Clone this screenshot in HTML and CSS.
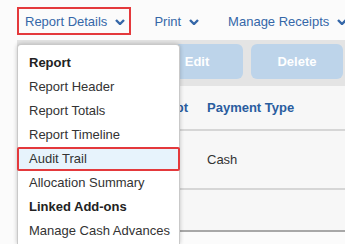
FILE: index.html
```html
<!DOCTYPE html>
<html lang="en">
<head>
    <meta charset="UTF-8">
    <meta name="viewport" content="width=device-width, initial-scale=1.0">
    <title>Report Details</title>
    <link rel="stylesheet" href="styles.css">
</head>
<body>
    <div class="nav">
        <div class="nav-item active">Report Details
            <svg class="chev" viewBox="0 0 10 6"><path d="M1 1l4 4 4-4"/></svg>
        </div>
        <div class="nav-item">Print
            <svg class="chev" viewBox="0 0 10 6"><path d="M1 1l4 4 4-4"/></svg>
        </div>
        <div class="nav-item">Manage Receipts
            <svg class="chev" viewBox="0 0 10 6"><path d="M1 1l4 4 4-4"/></svg>
        </div>
    </div>

    <div class="content">
        <div class="toolbar">
            <div class="btn">Edit</div>
            <div class="btn">Delete</div>
        </div>
        <div class="row head">
            <div></div>
            <div>Receipt</div>
            <div>Payment Type</div>
        </div>
        <div class="row">
            <div></div>
            <div></div>
            <div>Cash</div>
        </div>
        <div class="row last"></div>
    </div>

    <div class="menu">
        <div class="menu-head">Report</div>
        <div class="menu-item">Report Header</div>
        <div class="menu-item">Report Totals</div>
        <div class="menu-item">Report Timeline</div>
        <div class="menu-item selected">Audit Trail</div>
        <div class="menu-item">Allocation Summary</div>
        <div class="menu-head">Linked Add-ons</div>
        <div class="menu-item">Manage Cash Advances</div>
    </div>
</body>
</html>
```

FILE: styles.css
```css
body {
    font-family: 'Liberation Sans', Arial, sans-serif;
    font-size: 13px;
    background: #fbfbfb;
    margin: 0;
    width: 345px;
    height: 244px;
    overflow: hidden;
    position: relative;
}
.nav {
    display: flex;
    gap: 15px;
    height: 40px;
    padding: 7px 0 0 17px;
    box-sizing: border-box;
    color: #3567a8;
}
.nav-item {
    display: flex;
    align-items: center;
    gap: 8px;
    height: 28px;
    padding: 1px 4px 0 6px;
    border: 2px solid transparent;
    box-sizing: border-box;
    white-space: nowrap;
}
.nav-item.active {
    border-color: #e4393c;
}
.chev {
    width: 10px;
    height: 6px;
    fill: none;
    stroke: #3567a8;
    stroke-width: 2.4;
}
.content {
    margin-left: 17px;
    background: #f7f7f7;
}
.toolbar {
    display: flex;
    justify-content: flex-end;
    gap: 8px;
    height: 46px;
    padding: 4px 2px 0 0;
    box-sizing: border-box;
    background: #e4e4e4;
}
.btn {
    width: 92px;
    height: 35px;
    line-height: 35px;
    text-align: center;
    background: #bdd4ea;
    border-radius: 6px;
    color: #fff;
    font-weight: bold;
}
.row {
    display: grid;
    grid-template-columns: 124px 66px 1fr;
    align-items: center;
    height: 57px;
    border-bottom: 2px solid #d6d6d6;
    color: #333;
}
.row.head {
    height: 43px;
    font-weight: bold;
    color: #2a5d9f;
}
.row.last {
    height: 40px;
    border-bottom-color: #a8a8a8;
}
.menu {
    position: absolute;
    left: 17px;
    top: 44px;
    bottom: 0;
    width: 163px;
    padding-top: 6px;
    box-sizing: border-box;
    background: #fff;
    border: 1px solid #c9c9c9;
    border-bottom: none;
    border-radius: 4px 4px 0 0;
    box-shadow: 0 0 4px rgba(0, 0, 0, 0.22);
    color: #333;
}
.menu-head, .menu-item {
    height: 24px;
    line-height: 24px;
    padding-left: 11px;
    white-space: nowrap;
}
.menu-head {
    font-weight: bold;
    color: #222;
}
.menu-item.selected {
    margin: 0 -1px;
    padding-left: 10px;
    line-height: 20px;
    border: 2px solid #e4393c;
    border-radius: 2px;
    background: #e7f3fc;
    box-sizing: border-box;
}
```
